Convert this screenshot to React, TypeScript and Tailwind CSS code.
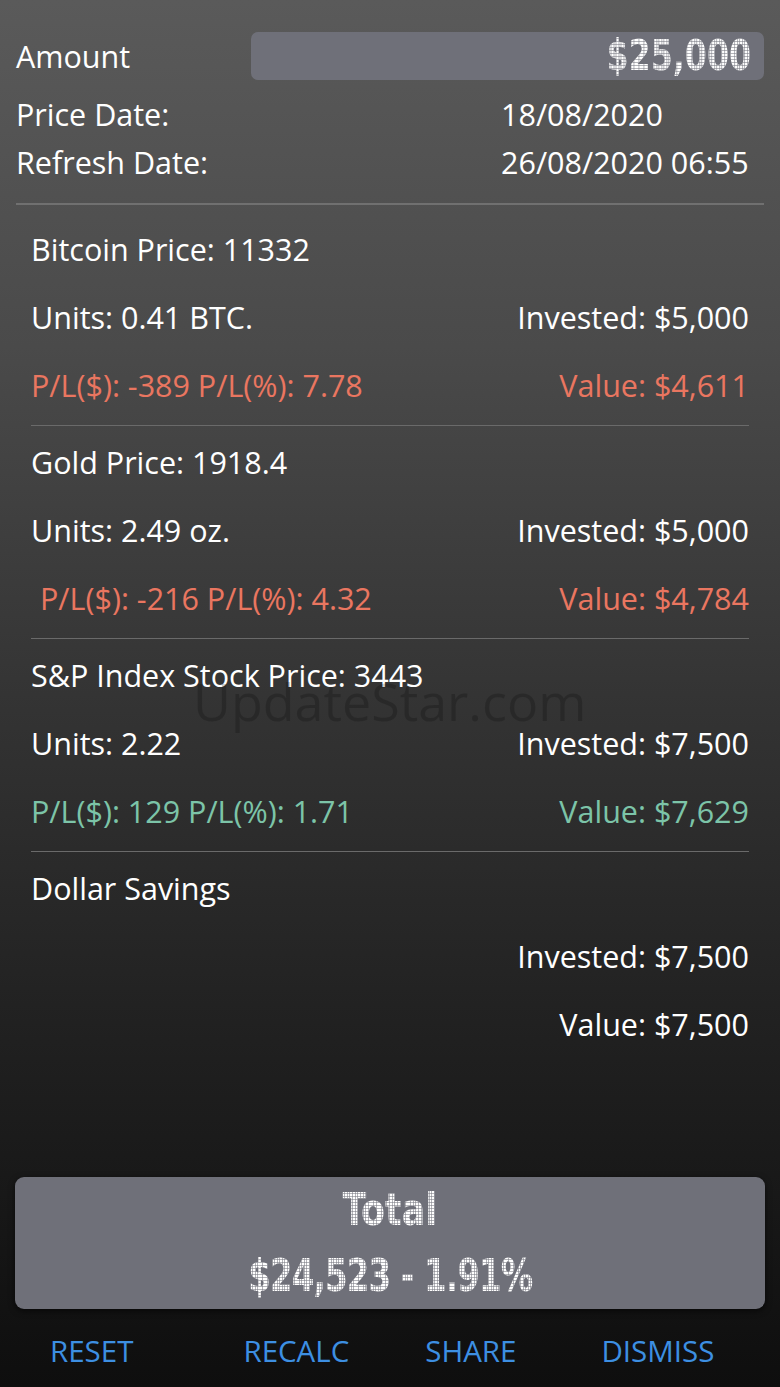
import React from "react";

const FONT = { fontFamily: '"Open Sans", "Noto Sans", sans-serif' };

const dot =
  "inline-block bg-[repeating-linear-gradient(90deg,transparent_0_2px,rgba(120,121,130,0.55)_2px_3px),repeating-linear-gradient(0deg,transparent_0_2px,rgba(120,121,130,0.55)_2px_3px),linear-gradient(#ffffff,#ffffff)] bg-clip-text text-transparent font-bold font-['DejaVu_Sans_Condensed','DejaVu_Sans',sans-serif] leading-none";

type Asset = {
  title: string;
  units?: string;
  invested: string;
  pl?: string;
  value: string;
  tone: "red" | "green" | "white";
  plIndent?: boolean;
};

const assets: Asset[] = [
  { title: "Bitcoin Price: 11332", units: "Units: 0.41 BTC.", invested: "Invested: $5,000", pl: "P/L($): -389 P/L(%): 7.78", value: "Value: $4,611", tone: "red" },
  { title: "Gold Price: 1918.4", units: "Units: 2.49 oz.", invested: "Invested: $5,000", pl: "P/L($): -216 P/L(%): 4.32", value: "Value: $4,784", tone: "red", plIndent: true },
  { title: "S&P Index Stock Price: 3443", units: "Units: 2.22", invested: "Invested: $7,500", pl: "P/L($): 129 P/L(%): 1.71", value: "Value: $7,629", tone: "green" },
];

function toneClass(t: Asset["tone"]) {
  if (t === "red") return "text-[#ea7660]";
  if (t === "green") return "text-[#7cc4a8]";
  return "text-white";
}

const row = "h-[68px] flex items-center pb-[4px]";

function AssetBlock({ a, first }: { a: Asset; first?: boolean }) {
  return (
    <div className={`mx-[31px] border-b border-[#6a6a6a] pb-[4px] ${first ? "pt-[12px]" : "pt-[4px]"}`}>
      <div className={row}>{a.title}</div>
      <div className={`${row} justify-between`}>
        <span>{a.units}</span>
        <span>{a.invested}</span>
      </div>
      <div className={`${row} justify-between ${toneClass(a.tone)}`}>
        <span className={a.plIndent ? "pl-[9px]" : ""}>{a.pl}</span>
        <span>{a.value}</span>
      </div>
    </div>
  );
}

export default function App() {
  return (
    <div
      className="relative w-[780px] h-[1387px] overflow-hidden text-white text-[30.5px] leading-none bg-[linear-gradient(180deg,#5a5a5a_0%,#4a4a4a_25%,#343434_50%,#202020_75%,#0e0e0e_100%)]"
      style={FONT}
    >
      <div className="flex flex-col">
        {/* header */}
        <div className="mx-4 mt-[32px] border-b-2 border-[#707070] pb-[17px]">
          <div className="flex items-center h-[48px]">
            <span className="w-[235px]">Amount</span>
            <div className="flex-1 h-[48px] rounded-[7px] bg-[#6f7079] flex items-center justify-end pr-[13px]">
              <span className={`${dot} text-[42px] scale-x-[0.84] origin-right`}>$25,000</span>
            </div>
          </div>
          <div className="flex items-center h-[48px] mt-[10px]">
            <span className="w-[485px]">Price Date:</span>
            <span>18/08/2020</span>
          </div>
          <div className="flex items-center h-[48px]">
            <span className="w-[485px]">Refresh Date:</span>
            <span>26/08/2020 06:55</span>
          </div>
        </div>

        {assets.map((a, i) => (
          <AssetBlock key={a.title} a={a} first={i === 0} />
        ))}

        <div className="mx-[31px] pt-[4px]">
          <div className={row}>Dollar Savings</div>
          <div className={`${row} justify-end`}>Invested: $7,500</div>
          <div className={`${row} justify-end`}>Value: $7,500</div>
        </div>

        <div className="mx-[15px] mt-[117px] h-[132px] rounded-[9px] bg-[#6f7079] shadow-[0_2px_6px_rgba(0,0,0,0.6)] flex flex-col items-center justify-center gap-[22px]">
          <span className={`${dot} text-[44px] scale-x-[0.88]`}>Total</span>
          <span className={`${dot} text-[44px] scale-x-[0.82] tracking-[-1px]`}>$24,523 - 1.91%</span>
        </div>

        <div className="flex items-center h-[84px] pl-[50px] text-[#3d8fe2] text-[29.5px]">
          <span>RESET</span>
          <span className="ml-[110px]">RECALC</span>
          <span className="ml-[76px]">SHARE</span>
          <span className="ml-[85px]">DISMISS</span>
        </div>
      </div>

      <div className="absolute left-[193px] top-[675px] text-[52px] leading-none text-black/20 pointer-events-none select-none">
        UpdateStar.com
      </div>
    </div>
  );
}
